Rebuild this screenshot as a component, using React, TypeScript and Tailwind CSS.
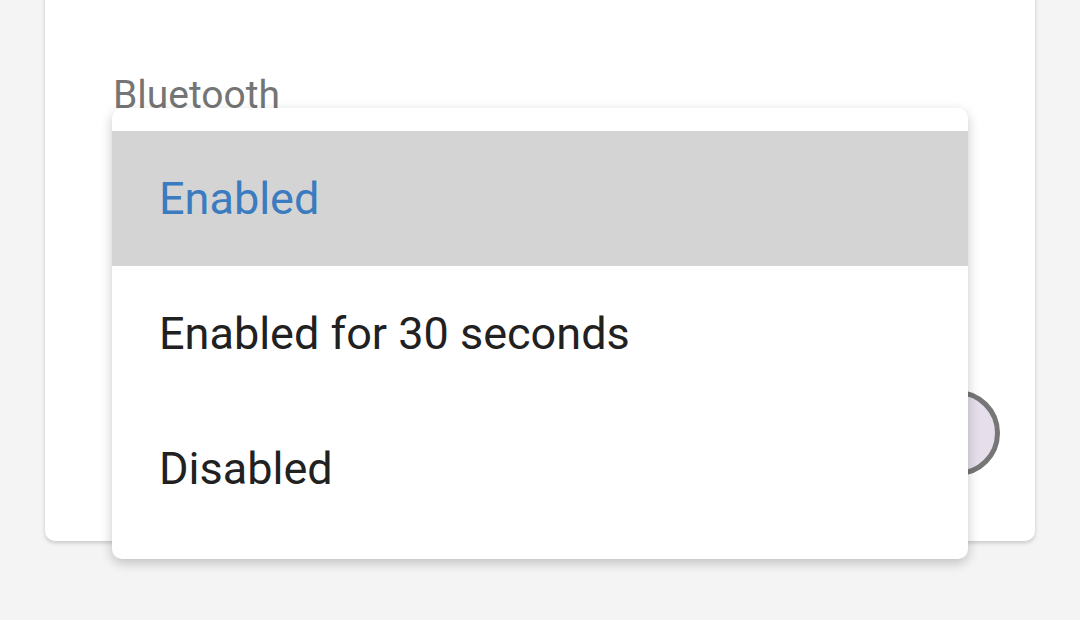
import React from "react";

const options = ["Enabled", "Enabled for 30 seconds", "Disabled"];

export default function App() {
  const selected = 0;

  return (
    <div
      className="relative h-[620px] w-[1080px] overflow-hidden bg-[#f4f4f4]"
      style={{ fontFamily: "Roboto, 'Noto Sans', sans-serif" }}
    >
      {/* Settings card */}
      <div className="mx-[45px] -mt-[20px] h-[561px] rounded-[10px] bg-white shadow-[0_2px_4px_rgba(0,0,0,0.18)]">
        <div className="flex flex-col pl-[68px] pr-[35px] pt-[93px]">
          <div className="text-[39px] leading-[44px] text-[#757575]">Bluetooth</div>
          <div className="mt-[273px] flex justify-end">
            <div className="h-[86px] w-[86px] rounded-full border-[5px] border-[#767676] bg-[#e6dfeb]" />
          </div>
        </div>
      </div>

      {/* Dropdown menu */}
      <div className="absolute left-[112px] top-[108px] w-[856px] rounded-[10px] bg-white py-[23px] shadow-[0_4px_12px_rgba(0,0,0,0.22)]">
        {options.map((opt, i) => (
          <div
            key={opt}
            className={
              i === selected
                ? "flex h-[135px] items-center bg-[#d4d4d4] pl-[47px] text-[45px] text-[#3b7bbf]"
                : "flex h-[135px] items-center pl-[47px] text-[45px] text-[#212121]"
            }
          >
            {opt}
          </div>
        ))}
      </div>
    </div>
  );
}
